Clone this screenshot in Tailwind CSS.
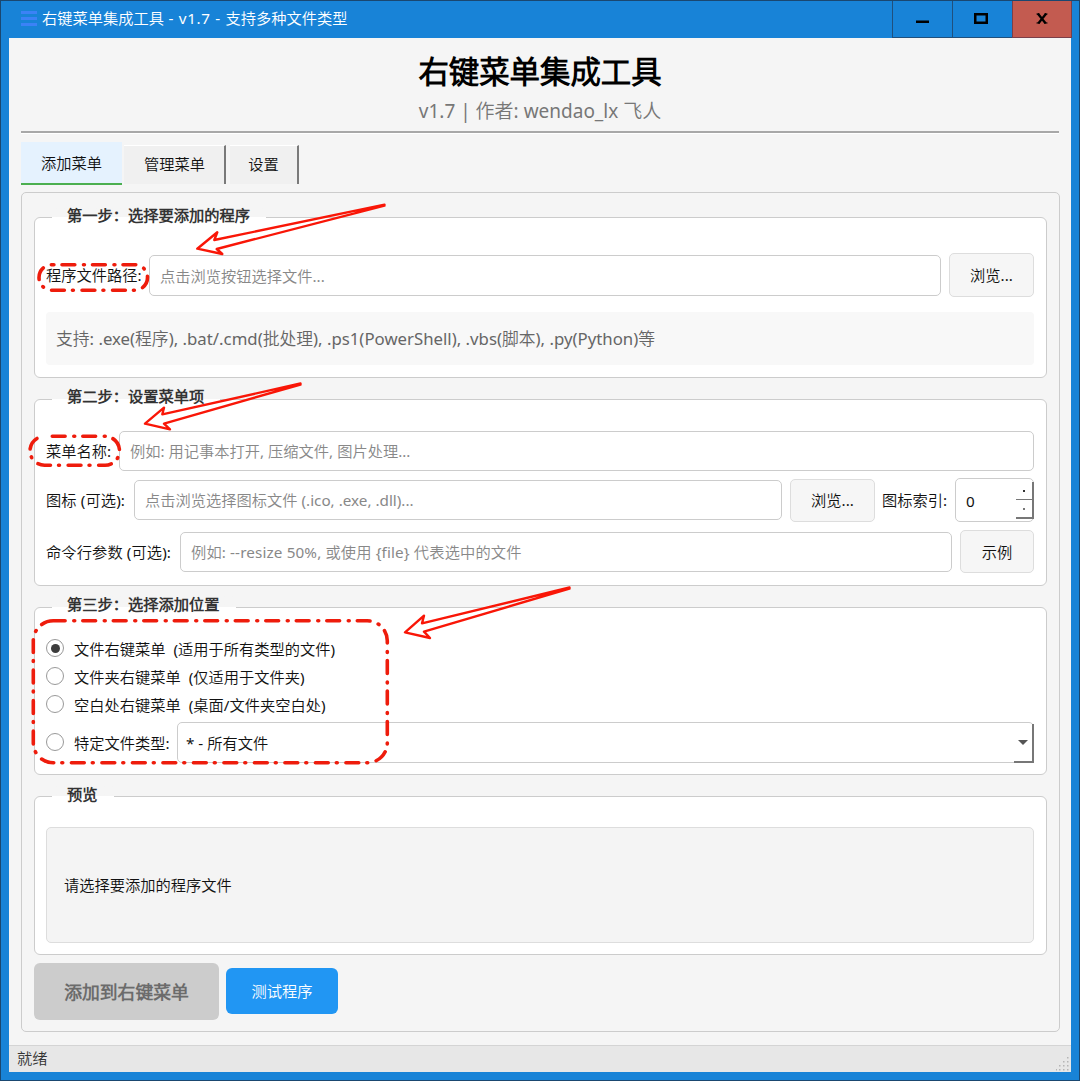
<!DOCTYPE html>
<html lang="zh-CN">
<head>
    <meta charset="UTF-8">
    <meta name="viewport" content="width=device-width, initial-scale=1.0">
    <title>右键菜单集成工具</title>
    <script src="https://cdn.jsdelivr.net/npm/@tailwindcss/browser@4"></script>
</head>
<body class="font-['Noto_Sans','Noto_Sans_CJK_SC_DemiLight','Noto_Sans_CJK_SC',sans-serif] text-[15.25px] leading-5 text-[#111] whitespace-nowrap">

    <div class="relative flex flex-col w-[1080px] h-[1081px] bg-[#1883d7] border border-[#1a4770] overflow-hidden">

        <!-- Title bar -->
        <div class="flex h-[37px] shrink-0 pl-5">
            <svg class="mt-[9px] mr-[5px] shrink-0" width="16" height="17" viewBox="0 0 16 17" fill="#3b82f6">
                <rect y="1" width="16" height="3"/>
                <rect y="7" width="16" height="3"/>
                <rect y="13" width="16" height="3"/>
            </svg>
            <div class="flex-1 pt-[7px] text-white">右键菜单集成工具<span class="tracking-[0.65px]"> - v1.7 - </span>支持多种文件类型</div>
            <div class="flex mr-[7px]">
                <div class="w-[60px] border-l border-b border-[#20507d] flex items-center justify-center">
                    <svg width="13" height="12"><rect y="7.5" width="13" height="2.5" fill="#000"/></svg>
                </div>
                <div class="w-[60px] border-l border-b border-[#20507d] flex items-center justify-center">
                    <svg class="mr-[3px] mb-0.5" width="14" height="11"><rect x="1.25" y="1.25" width="11.5" height="8.5" fill="none" stroke="#000" stroke-width="2.5"/></svg>
                </div>
                <div class="w-[60px] border-x border-b border-[#7b3f49] bg-[#c35b50] flex items-center justify-center">
                    <svg class="mr-px mb-px" width="12" height="11" viewBox="0 0 12 11" fill="none" stroke="#000" stroke-width="2.4">
                        <path d="M1.8 .6 9.7 10.4M10.2 .6 2.3 10.4"/>
                        <path d="M.5 1h3M8.5 1h3M.5 10h3M8.5 10h3" stroke-width="1.2"/>
                    </svg>
                </div>
            </div>
        </div>

        <!-- Client area -->
        <div class="flex flex-col ml-2 w-[1062px] h-[1034px] bg-[#f5f5f5]">
            <div class="h-[93px] text-center pt-[14px] mx-3">
                <h1 class="text-[30.4px] leading-10 font-bold text-black">右键菜单集成工具</h1>
                <p class="pt-px text-[19px] leading-9 text-[#777]">v1.7 | 作者: wendao_lx 飞人</p>
            </div>
            <div class="mx-3 h-[3px] shrink-0 border-t-2 border-[#a8a8a8] bg-white"></div>

            <!-- Tabs -->
            <div class="flex items-end h-[51px] ml-3 pb-0">
                <div class="w-[101px] h-[43px] bg-[#e5f2fe] border-b-2 border-[#4caf50] text-center pt-[11px]">添加菜单</div>
                <div class="ml-[2px] mb-px w-[102px] h-[39px] bg-[#f0f0f0] border-t border-t-white border-r-2 border-r-[#7a7a7a] text-center pt-[8px] pl-px">管理菜单</div>
                <div class="ml-[4px] mb-px w-[69px] h-[39px] bg-[#f0f0f0] border-t border-t-white border-r-2 border-r-[#7a7a7a] text-center pt-[8px]">设置</div>
            </div>

            <div class="mt-[7px] ml-3 w-[1039px] h-[840px] shrink-0 border border-[#ccc] rounded-[5px] pl-3 pt-6">

                <!-- Step 1 -->
                <section class="relative w-[1013px] h-[161px] border border-[#ccc] rounded-md bg-white pl-[11px] pr-3 pt-[35px]">
                    <h2 class="absolute left-[17px] -top-[13px] w-[214px] h-5 pl-[15px] font-bold text-[#333] bg-linear-to-b from-[#f5f5f5] from-60% to-white to-60%">第一步：选择要添加的程序</h2>
                    <div class="flex items-center">
                        <label class="w-[103px]">程序文件路径:</label>
                        <div class="flex-1 h-[41px] mr-2 border border-[#ccc] rounded-[5px] px-[10px] pt-[10px] text-[#888]">点击浏览按钮选择文件...</div>
                        <button class="w-[85px] h-11 bg-[#f6f6f6] border border-[#ddd] rounded-[5px]">浏览...</button>
                    </div>
                    <div class="mt-[15px] h-[53px] bg-[#f8f8f8] rounded-sm pl-[10px] pt-[17px] text-[16.8px] text-[#666]">支持: .exe(程序), .bat/.cmd(批处理), .ps1(PowerShell), .vbs(脚本), .py(Python)等</div>
                </section>

                <!-- Step 2 -->
                <section class="relative mt-[21px] w-[1013px] h-[187px] border border-[#ccc] rounded-md bg-white pl-[11px] pr-3 pt-[31px]">
                    <h2 class="absolute left-[17px] -top-[14px] w-[168px] h-5 pl-[15px] font-bold text-[#333] bg-linear-to-b from-[#f5f5f5] from-65% to-white to-65%">第二步：设置菜单项</h2>
                    <div class="flex items-center">
                        <label class="w-[73px]">菜单名称:</label>
                        <div class="flex-1 h-10 border border-[#ccc] rounded-[5px] px-[10px] pt-[9px] text-[#888]">例如: 用记事本打开, 压缩文件, 图片处理...</div>
                    </div>
                    <div class="flex items-center mt-[7px]">
                        <label class="w-[88px] tracking-[0.1px]">图标 (可选):</label>
                        <div class="flex-1 h-10 mr-2 border border-[#ccc] rounded-[5px] px-[10px] pt-[9px] text-[#888]">点击浏览选择图标文件 (.ico, .exe, .dll)...</div>
                        <button class="w-[85px] h-[43px] bg-[#f6f6f6] border border-[#ddd] rounded-[5px]">浏览...</button>
                        <label class="w-[80px] pl-[7px]">图标索引:</label>
                        <div class="flex w-[79px] h-11 border border-[#ccc] rounded-[5px] pl-[10px]">
                            <span class="flex-1 pt-3">0</span>
                            <div class="w-[18px] mt-[3px] -mr-px">
                                <div class="h-[18px] border-b border-r-2 border-[#777] flex items-center justify-center"><span class="size-0.5 bg-[#333]"></span></div>
                                <div class="h-[19px] border-b-2 border-r-2 border-[#777] flex items-center justify-center"><span class="size-0.5 bg-[#777]"></span></div>
                            </div>
                        </div>
                    </div>
                    <div class="flex items-center mt-2">
                        <label class="w-[134px] tracking-[0.1px]">命令行参数 (可选):</label>
                        <div class="flex-1 h-10 mr-2 border border-[#ccc] rounded-[5px] px-[10px] pt-[9px] text-[#888] tracking-[0.13px]">例如: --resize 50%, 或使用 {file} 代表选中的文件</div>
                        <button class="w-[74px] h-[43px] bg-[#f6f6f6] border border-[#ddd] rounded-[5px]">示例</button>
                    </div>
                </section>

                <!-- Step 3 -->
                <section class="relative mt-[21px] w-[1013px] h-[168px] border border-[#ccc] rounded-md bg-white pl-[11px] pr-3 pt-[26px]">
                    <h2 class="absolute left-[17px] -top-[14px] w-[184px] h-5 pl-[15px] font-bold text-[#333] bg-linear-to-b from-[#f5f5f5] from-65% to-white to-65%">第三步：选择添加位置</h2>
                    <div class="flex items-center h-7">
                        <span class="size-[18px] mr-[10px] rounded-full border border-[#999] flex items-center justify-center"><span class="size-[9px] rounded-full bg-[#3c3c3c]"></span></span>
                        <span class="pt-px">文件右键菜单&nbsp; (适用于所有类型的文件)</span>
                    </div>
                    <div class="flex items-center h-7">
                        <span class="size-[18px] mr-[10px] rounded-full border border-[#999]"></span>
                        <span class="pt-px">文件夹右键菜单&nbsp; (仅适用于文件夹)</span>
                    </div>
                    <div class="flex items-center h-7">
                        <span class="size-[18px] mr-[10px] rounded-full border border-[#999]"></span>
                        <span class="pt-px">空白处右键菜单&nbsp; (桌面/文件夹空白处)</span>
                    </div>
                    <div class="flex items-center mt-[4px]">
                        <span class="size-[18px] mr-[10px] mb-px rounded-full border border-[#999]"></span>
                        <label class="w-[103px]">特定文件类型:</label>
                        <div class="flex-1 flex h-[41px] border border-[#ccc] rounded-[5px] pl-2">
                            <span class="flex-1 pt-[10px]">* - 所有文件</span>
                            <div class="w-5 mt-px -mr-px -mb-px border-r-2 border-b-2 border-[#777] flex items-center justify-center">
                                <svg width="10" height="5"><path d="M0 0h10L5 5z" fill="#555"/></svg>
                            </div>
                        </div>
                    </div>
                </section>

                <!-- Preview -->
                <section class="relative mt-[21px] w-[1013px] h-[159px] border border-[#ccc] rounded-md bg-white pl-[11px] pr-3 pt-[30px]">
                    <h2 class="absolute left-[17px] -top-[13px] w-[62px] h-5 pl-[15px] font-bold text-[#333] bg-linear-to-b from-[#f5f5f5] from-60% to-white to-60%">预览</h2>
                    <div class="flex items-center h-[116px] bg-[#f4f4f4] border border-[#ddd] rounded-[5px] pl-[17px]">请选择要添加的程序文件</div>
                </section>

                <div class="flex items-center mt-2">
                    <button class="w-[185px] h-[57px] mr-[7px] bg-[#ccc] rounded-md text-[17.8px] font-bold text-[#6b6b6b]">添加到右键菜单</button>
                    <button class="w-[112px] h-[46px] mb-px bg-[#2196f3] rounded-md text-white">测试程序</button>
                </div>
            </div>

            <!-- Status bar -->
            <div class="flex justify-between mt-[13px] h-[27px] bg-[#e7e7e7] border-t border-[#d4d4d4] pl-2 pt-[2px] text-[#333]">
                <span>就绪</span>
                <svg class="mt-[9px]" width="15" height="15" fill="#b5b5b5">
                    <path d="M11 0h1.5v1.5H11zM11 4h1.5v1.5H11zM7 4h1.5v1.5H7zM11 8h1.5v1.5H11zM7 8h1.5v1.5H7zM3 8h1.5v1.5H3zM11 12h1.5v1.5H11zM7 12h1.5v1.5H7zM3 12h1.5v1.5H3zM0 12h1v1.5H0z"/>
                </svg>
            </div>
        </div>

        <!-- Red markup over the form -->
        <svg class="absolute -left-px -top-px" width="1080" height="1081" fill="none" stroke="#ee1c0c" stroke-linecap="round" stroke-linejoin="round">
            <g stroke-width="3.6" stroke-dasharray="12.8 8.7 .9 8.1">
                <rect x="39" y="264.7" width="108.5" height="25.5" rx="12.7" stroke-dashoffset="20.2"/>
                <rect x="30" y="436.3" width="89.5" height="29" rx="14.5" stroke-dashoffset="22.7"/>
                <rect x="33.3" y="620.8" width="354" height="142" rx="20" stroke-dashoffset="1"/>
            </g>
            <g stroke="#f91607" stroke-width="2.4">
                <path d="M384.5 204.7 214.3 240l3-7.7-20 16.4 25 5.3-5.6-5L384.5 205.7"/>
                <path d="M300.5 383.5 162.3 414.3l1.7-6.6-19 16 25 5.6-6-5.6L300.5 384.5"/>
                <path d="M569.5 587.5 422 623.3l2-7.6-19 16.6 25 5.7-6-6.3L569.5 588.5"/>
            </g>
        </svg>
    </div>
</body>
</html>
